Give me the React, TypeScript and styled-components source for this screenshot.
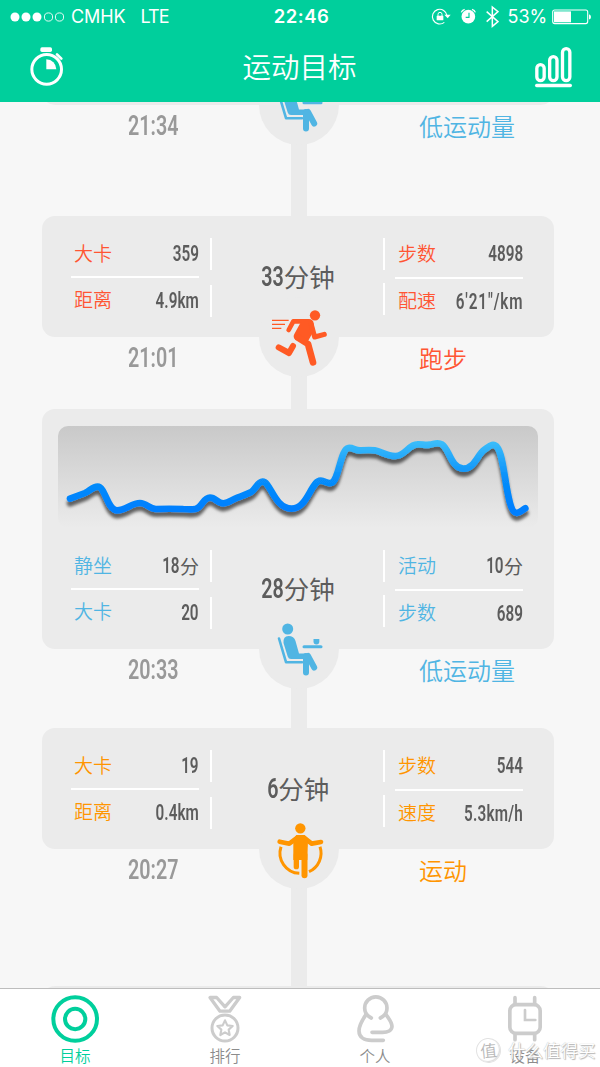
import React from "react";
import styled, { createGlobalStyle } from "styled-components";

const GREEN = "#00cf9c";
const RED = "#ff5533";
const BLUE = "#50b5e3";
const ORANGE = "#ff9500";
const FLAME = "#ff5a24";
const CARD = "#ebebeb";
const CJK = '"Noto Sans CJK SC", sans-serif';

const Global = createGlobalStyle`
  * { box-sizing: border-box; }
  body { margin: 0; background: #f7f7f7; font-family: ${CJK}; }
  svg { display: block; }
`;

const Screen = styled.div`
  position: relative;
  width: 600px;
  height: 1067px;
  display: flex;
  flex-direction: column;
  overflow: hidden;
  background: #f7f7f7;
`;

const Header = styled.header`
  height: 102px;
  flex: none;
  background: ${GREEN};
  color: #fff;
`;

const StatusBar = styled.div`
  height: 32px;
  display: grid;
  grid-template-columns: 1fr auto 1fr;
  align-items: center;
  padding: 1px 8px 0 10px;
  font: 400 18px/32px Inter, sans-serif;
`;

const StatusGroup = styled.div<{ $end?: boolean }>`
  display: flex;
  align-items: center;
  justify-content: ${(p) => (p.$end ? "flex-end" : "flex-start")};
`;

const Carrier = styled.span`
  margin-left: 7px;
  letter-spacing: -0.1px;
`;

const Network = styled.span`
  margin-left: 15px;
  letter-spacing: -0.9px;
`;

const Clock = styled.span`
  padding: 0 0 2px 1px;
  font-weight: 600;
  font-size: 18.5px;
  letter-spacing: 0.5px;
  line-height: 30px;
`;

const Battery = styled.span`
  margin: 0 5px 0 9px;
  letter-spacing: -0.1px;
`;

const NavBar = styled.div`
  height: 70px;
  display: flex;
  align-items: center;
  justify-content: space-between;
  padding: 0 26px 0 29px;
`;

const Title = styled.h1`
  margin: 0 0 3px;
  font: 350 28.5px/40px ${CJK};
`;

const Timeline = styled.main`
  flex: 1;
  min-height: 0;
  overflow: hidden;
`;

const Card = styled.section<{ $peek?: "top" | "bottom" }>`
  margin: 0 46px 0 42px;
  height: ${(p) => (p.$peek ? "40px" : "auto")};
  margin-top: ${(p) => (p.$peek === "top" ? "-37px" : "0")};
  border-radius: 13px;
  background: ${CARD};
`;

const ChartArea = styled.div`
  padding: 17px 16px 0;
`;

const ChartPanel = styled.div`
  height: 102px;
  border-radius: 10px;
  background: linear-gradient(#c9c9c9, ${CARD});
`;

const Stats = styled.div`
  height: 121px;
  display: grid;
  grid-template-columns: 139px 2px 171px 12px 128px;
  padding-left: 29px;
`;

const StatColumn = styled.div<{ $low?: boolean }>`
  width: 128px;
  padding-top: 15px;
  display: grid;
  grid-template-columns: 128px;
  grid-template-rows: ${(p) => (p.$low ? "46px 2px 45px" : "45px 2px 45px")};
  align-content: start;
`;

const StatRow = styled.div<{ $color: string; $lift?: number }>`
  display: flex;
  align-items: center;
  padding-left: 3px;
  color: ${(p) => p.$color};
  font: 350 19px/24px ${CJK};
  white-space: nowrap;
  & > span:first-child { padding-bottom: ${(p) => (p.$lift ?? 1) * 2}px; }
`;

const Rule = styled.div`
  background: #fff;
`;

const Bars = styled.div<{ $gap: number }>`
  width: 2px;
  padding-top: 22px;
  display: flex;
  flex-direction: column;
  gap: ${(p) => p.$gap}px;
`;

const Bar = styled.i`
  height: 32px;
  background: #fff;
`;

const Value = styled.span`
  flex: 1;
  min-width: 0;
  display: flex;
  align-items: center;
  justify-content: flex-end;
  color: #5c5c5c;
  font-weight: 400;
`;

const Num = styled.span<{ $size: number; $scale: number; $origin?: string; $pull?: number; $track?: number }>`
  display: inline-block;
  font: 650 ${(p) => p.$size}px/28px Roboto, sans-serif;
  letter-spacing: ${(p) => p.$track ?? 0}px;
  transform: scaleX(${(p) => p.$scale});
  transform-origin: ${(p) => p.$origin ?? "right"} center;
  margin-left: ${(p) => p.$pull ?? 0}px;
`;

const Duration = styled.div`
  display: flex;
  align-items: center;
  justify-content: center;
  padding-left: 1px;
  color: #5c5c5c;
  font: 400 25.5px/36px ${CJK};
  & > span:last-child { padding-bottom: 2px; }
`;

const Footer = styled.div<{ $height: number }>`
  position: relative;
  height: ${(p) => p.$height}px;
  display: grid;
  grid-template-columns: 291px 16px 1fr;
`;

const Stem = styled.div`
  background: ${CARD};
`;

const Time = styled.div`
  padding: 7px 0 0 128px;
  color: #999;
  line-height: 28px;
`;

const Kind = styled.div<{ $color: string }>`
  padding: 3px 0 0 112px;
  color: ${(p) => p.$color};
  font: 350 24px/36px ${CJK};
`;

const Badge = styled.div`
  position: absolute;
  left: 259px;
  top: -40px;
  width: 80px;
  height: 80px;
  border-radius: 50%;
  background: ${CARD};
`;

const TabBar = styled.nav`
  height: 79px;
  flex: none;
  display: grid;
  grid-template-columns: repeat(4, 1fr);
  background: #fff;
  border-top: 1px solid #bdbdbd;
`;

const Tab = styled.div<{ $active?: boolean }>`
  display: flex;
  flex-direction: column;
  align-items: center;
  padding-top: 5px;
  color: ${(p) => (p.$active ? GREEN : "#8c8c8c")};
  font: 350 15.5px/22px ${CJK};
`;

const Watermark = styled.div`
  position: absolute;
  left: 476px;
  top: 1037px;
  display: flex;
  align-items: center;
  gap: 7px;
  color: #fff;
  font: 350 17.5px/26px ${CJK};
  text-shadow: 0 0 1px #aaa, 1px 1px 1px #b5b5b5;
  white-space: nowrap;
`;

const Seal = styled.span`
  width: 25px;
  height: 25px;
  border-radius: 50%;
  border: 1px solid #e2e2e2;
  box-shadow: inset -1px -1px 1px #ddd;
  background: rgba(255, 255, 255, 0.6);
  color: #b8b8b8;
  font-size: 16.5px;
  line-height: 22px;
  text-align: center;
  text-shadow: none;
  transform: rotate(-6deg);
`;

const SignalDots = () => (
  <svg width="54" height="10" viewBox="0 0 54 10" fill="none" stroke="#fff">
    {[5, 16, 27].map((x) => <circle key={x} cx={x} cy="5" r="4.5" fill="#fff" stroke="none" />)}
    {[38.5, 49.5].map((x) => <circle key={x} cx={x} cy="5" r="4.1" strokeWidth="0.9" />)}
  </svg>
);

const StatusIcons = () => (
  <svg width="68" height="24" viewBox="390 14 204 72" fill="none" stroke="#fff">
    <path d="M430 66A22 22 0 1 1 438 46" strokeWidth="3.5" />
    <path d="M430 43h19l-9 11z" fill="#fff" stroke="none" />
    <rect x="407" y="46" width="20" height="14" rx="1" fill="#fff" stroke="none" />
    <path d="M411 47v-5a6 6 0 0 1 12 0v5" strokeWidth="3" />
    <circle cx="502" cy="49" r="20.5" fill="#fff" stroke="none" />
    <path d="M504 37v14h-10" stroke={GREEN} strokeWidth="3.5" />
    <path d="M481 36q2-7 10-9M523 36q-2-7-10-9" strokeWidth="4" />
    <path d="M557 34l34 30-17 14V20l17 14-34 30" strokeWidth="4.5" />
  </svg>
);

const BatteryIcon = () => (
  <svg width="40" height="16" viewBox="0 0 40 16" fill="none">
    <rect x="0.7" y="1" width="35" height="13.6" rx="2" stroke="#fff" strokeWidth="1.1" />
    <rect x="2" y="2.4" width="17" height="10.9" fill="#fff" />
    <path d="M37 5.3q2 .5 2 2.6t-2 2.6z" fill="#fff" />
  </svg>
);

const StopwatchIcon = () => (
  <svg width="36" height="42" viewBox="87 138 108 126" fill="none" stroke="#fff">
    <circle cx="140" cy="208" r="44.5" strokeWidth="9" />
    <rect x="121" y="142" width="35" height="14" rx="5" fill="#fff" stroke="none" />
    <path d="M171 163l13 13" strokeWidth="8" strokeLinecap="round" />
    <path d="M139 178a30 30 0 0 1 30 30h-30z" fill="#fff" stroke="none" />
  </svg>
);

const ChartIcon = () => (
  <svg width="40" height="44" viewBox="703 135 120 132" fill="none" stroke="#fff" strokeWidth="10">
    <rect x="711.500" y="194" width="22" height="48" rx="11" />
    <rect x="750" y="170" width="22" height="72" rx="11" />
    <rect x="788.500" y="146" width="22" height="96" rx="11" />
    <path d="M711 256.500h101" strokeWidth="10" strokeLinecap="round" />
  </svg>
);

const SitIcon = () => (
  <svg width="80" height="80" viewBox="0 0 80 80" fill="none" stroke={BLUE} strokeLinecap="round" strokeLinejoin="round">
    <circle cx="28.700" cy="20" r="5.500" fill={BLUE} stroke="none" />
    <path d="M20 29.500L27 53.200H43" strokeWidth="2.600" />
    <path d="M24.500 34q-.5-7 5-7t7 5l3.500 12.500h9.500V50H32q-2.500 0-3.300-2.500z" fill={BLUE} stroke="none" />
    <path d="M47 47v16.500M49 47l6.200 11.500" strokeWidth="6" />
    <path d="M45 37.800h17" strokeWidth="3" />
    <path d="M54.500 30h5.800v2.500q0 3-2.900 3t-2.900-3z" fill={BLUE} stroke="none" />
  </svg>
);

const RunIcon = () => (
  <svg width="80" height="80" viewBox="12 -9 240 240" fill="none" stroke={FLAME} strokeLinecap="round" strokeLinejoin="round">
    <circle cx="180" cy="46" r="15.500" fill={FLAME} stroke="none" />
    <path d="M51 61h50M51 73h39M51 85h28" strokeWidth="4" strokeLinecap="butt" />
    <path d="M101 90l14-26h42" strokeWidth="14" />
    <path d="M122 57h40q12 1 14 12l2 20-17 31-8 6-30-6q-11-7-5-18l18-33z" fill={FLAME} stroke="none" />
    <path d="M169 74l10 37 29-8" strokeWidth="15" />
    <path d="M129 113l30 19 15 55" strokeWidth="20" />
    <path d="M114 138l-12 21-31-17" strokeWidth="18" />
  </svg>
);

const JumpIcon = () => (
  <svg width="80" height="80" viewBox="57 267 240 240" fill="none" stroke={ORANGE} strokeLinecap="round" strokeLinejoin="round">
    <circle cx="181" cy="325" r="15.500" fill={ORANGE} stroke="none" />
    <path d="M119 365l29 6 24-18M243 366l-28 5-23-18" strokeWidth="14" />
    <path d="M169 345h25l10 13-2 62h-42v-62z" fill={ORANGE} stroke="none" />
    <path d="M169 405v35" strokeWidth="16" />
    <path d="M193.500 405v61" strokeWidth="18" />
    <path d="M123 380a61 61 0 0 0 55 80M207 455a61 61 0 0 0 33-75" strokeWidth="9" strokeLinecap="butt" />
  </svg>
);

const TargetIcon = () => (
  <svg width="50" height="50" viewBox="150 102 150 150" fill="none" stroke={GREEN} strokeWidth="12">
    <circle cx="225.500" cy="177" r="65.500" />
    <circle cx="225.500" cy="177" r="30.500" />
  </svg>
);

const MedalIcon = () => (
  <svg width="50" height="50" viewBox="602 102 150 150" fill="none" stroke="#ccc" strokeLinejoin="round">
    <path d="M632 112.500h20l25 28 25-28h19l-30 41h-29z" strokeWidth="10" />
    <circle cx="677" cy="204" r="39" strokeWidth="9" />
    <path d="M677 181l7 15 16 2-12 11 3 16-14-8-14 8 3-16-12-11 16-2z" strokeWidth="6.500" />
  </svg>
);

const PersonIcon = () => (
  <svg width="50" height="50" viewBox="150 102 150 150" fill="none" stroke="#ccc" strokeWidth="11" strokeLinecap="round">
    <path d="M214 174q-20-10-20-30a33.500 33.500 0 0 1 67 0q0 20-20 30" />
    <path d="M198 164c-12 17-21 32-21 49 0 19 16 28 38 28h35" />
    <path d="M258 164c10 13 18 27 18 35 0 12-13 18-28 18h-32" />
  </svg>
);

const WatchIcon = () => (
  <svg width="50" height="50" viewBox="600 102 150 150" fill="none" stroke="#ccc" strokeWidth="11" strokeLinecap="round">
    <rect x="629.500" y="134" width="91" height="86" rx="18" />
    <path d="M645 113v20M704 113v20M645 222v17M704 222v17" strokeWidth="11" />
    <path d="M675 150v30h31" strokeWidth="8" />
  </svg>
);

const ActivityChart = () => (
  <svg width="480" height="102" viewBox="84 78 1440 306" fill="none" overflow="visible">
    <defs>
      <linearGradient id="line" gradientUnits="userSpaceOnUse" x1="0" y1="125" x2="0" y2="330">
        <stop offset="0" stopColor="#3bbdfa" />
        <stop offset="0.55" stopColor="#078dfa" />
        <stop offset="1" stopColor="#007fff" />
      </linearGradient>
      <filter id="shade" filterUnits="userSpaceOnUse" x="84" y="78" width="1440" height="330">
        <feDropShadow dx="0" dy="14" stdDeviation="5" floodColor="#000" floodOpacity="0.58" />
      </filter>
    </defs>
    <path
      filter="url(#shade)"
      stroke="url(#line)"
      strokeWidth="20"
      strokeLinecap="round"
      d="M120 296L165 279C180 272 188 260 203 260C226 260 232 330 260 331C285 332 305 309 330 309C350 309 358 327 378 327C405 326 430 326 460 327C478 327 482 330 498 326C516 321 520 293 540 293C557 293 563 310 580 310C596 310 605 299 622 293C638 287 648 284 662 277C677 269 682 245 698 245C722 245 732 325 785 326C833 326 843 242 872 242C885 242 890 251 902 249C928 245 930 148 955 144C970 142 975 152 992 151C1008 150 1020 149 1034 151C1055 155 1070 168 1096 168C1126 168 1136 133 1162 133C1177 132 1184 136 1199 134C1213 132 1222 125 1236 133C1257 145 1263 205 1300 206C1334 206 1343 163 1362 150C1377 140 1389 126 1402 142C1426 170 1428 338 1460 339C1472 338 1476 330 1486 325"
    />
  </svg>
);

type Stat = { label: string; num: string; unit?: string; track?: number };

const StatValue = ({ num, unit, track }: Stat) => (
  <Value>
    <Num $size={21.5} $scale={0.71} $track={track}>{num}</Num>
    {unit && <span>{unit}</span>}
  </Value>
);

const StatsPanel = ({ color, left, right, minutes }: { color: string; left: Stat[]; right: Stat[]; minutes: string }) => (
  <Stats>
    <StatColumn>
      <StatRow $color={color}><span>{left[0].label}</span><StatValue {...left[0]} /></StatRow>
      <Rule />
      <StatRow $color={color} $lift={2}><span>{left[1].label}</span><StatValue {...left[1]} /></StatRow>
    </StatColumn>
    <Bars $gap={15}><Bar /><Bar /></Bars>
    <Duration>
      <Num $size={27} $scale={0.73} $pull={minutes.length * -4.1}>{minutes}</Num>
      <span>分钟</span>
    </Duration>
    <Bars $gap={13}><Bar /><Bar /></Bars>
    <StatColumn $low>
      <StatRow $color={color}><span>{right[0].label}</span><StatValue {...right[0]} /></StatRow>
      <Rule />
      <StatRow $color={color} $lift={2}><span>{right[1].label}</span><StatValue {...right[1]} /></StatRow>
    </StatColumn>
  </Stats>
);

const EntryFooter = ({ time, kind, color, height, children }: { time: string; kind: string; color: string; height: number; children: React.ReactNode }) => (
  <Footer $height={height}>
    <Time><Num $size={27} $scale={0.73} $origin="left">{time}</Num></Time>
    <Stem />
    <Kind $color={color}>{kind}</Kind>
    <Badge>{children}</Badge>
  </Footer>
);

export default function App() {
  return (
    <Screen>
      <Global />
      <Header>
        <StatusBar>
          <StatusGroup>
            <SignalDots />
            <Carrier>CMHK</Carrier>
            <Network>LTE</Network>
          </StatusGroup>
          <Clock>22:46</Clock>
          <StatusGroup $end>
            <StatusIcons />
            <Battery>53%</Battery>
            <BatteryIcon />
          </StatusGroup>
        </StatusBar>
        <NavBar>
          <StopwatchIcon />
          <Title>运动目标</Title>
          <ChartIcon />
        </NavBar>
      </Header>

      <Timeline>
        <Card $peek="top" />
        <EntryFooter time="21:34" kind="低运动量" color={BLUE} height={111}><SitIcon /></EntryFooter>

        <Card>
          <StatsPanel
            color={RED}
            minutes="33"
            left={[{ label: "大卡", num: "359" }, { label: "距离", num: "4.9km" }]}
            right={[{ label: "步数", num: "4898" }, { label: "配速", num: "6'21\"/km", track: 1.25 }]}
          />
        </Card>
        <EntryFooter time="21:01" kind="跑步" color={RED} height={72}><RunIcon /></EntryFooter>

        <Card>
          <ChartArea>
            <ChartPanel><ActivityChart /></ChartPanel>
          </ChartArea>
          <StatsPanel
            color={BLUE}
            minutes="28"
            left={[{ label: "静坐", num: "18", unit: "分" }, { label: "大卡", num: "20" }]}
            right={[{ label: "活动", num: "10", unit: "分" }, { label: "步数", num: "689" }]}
          />
        </Card>
        <EntryFooter time="20:33" kind="低运动量" color={BLUE} height={79}><SitIcon /></EntryFooter>

        <Card>
          <StatsPanel
            color={ORANGE}
            minutes="6"
            left={[{ label: "大卡", num: "19" }, { label: "距离", num: "0.4km" }]}
            right={[{ label: "步数", num: "544" }, { label: "速度", num: "5.3km/h", track: 0.3 }]}
          />
        </Card>
        <EntryFooter time="20:27" kind="运动" color={ORANGE} height={137}><JumpIcon /></EntryFooter>
        <Card $peek="bottom" />
      </Timeline>

      <TabBar>
        <Tab $active><TargetIcon />目标</Tab>
        <Tab><MedalIcon />排行</Tab>
        <Tab><PersonIcon />个人</Tab>
        <Tab><WatchIcon />设备</Tab>
      </TabBar>
      <Watermark><Seal>值</Seal>什么值得买</Watermark>
    </Screen>
  );
}
